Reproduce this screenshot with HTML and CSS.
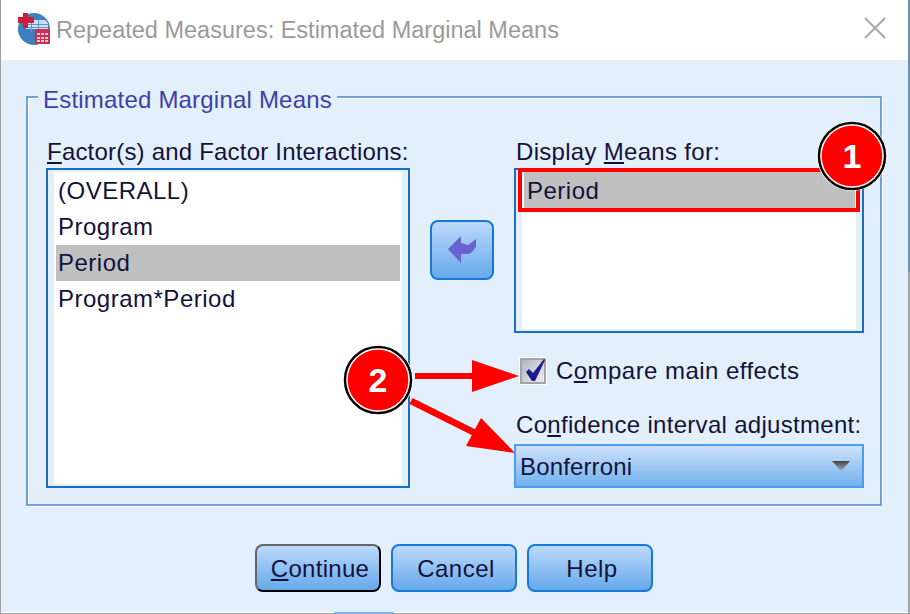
FILE: index.html
```html
<!DOCTYPE html>
<html lang="en">
<head>
    <meta charset="UTF-8">
    <meta name="viewport" content="width=device-width, initial-scale=1.0">
    <title>Repeated Measures: Estimated Marginal Means</title>
    <link rel="stylesheet" href="styles.css">
</head>
<body>
    <div class="dialog">
        <div class="titlebar">
            <svg class="app-icon" width="33" height="33" viewBox="0 0 33 33">
                <circle cx="16" cy="16" r="16" fill="#3f7fbd"/>
                <path d="M8 7h19l3 3v6H8z" fill="#cfe0f2"/>
                <path d="M8 11h22v1H8zM8 14h22v1H8zM13 7h1v12h-1zM20 7h1v9h-1z" fill="#5d94cb"/>
                <path d="M5 0h5v4h6v6h-6v5H5v-5H0V4h5z" fill="#cf1b3c"/>
                <rect x="17" y="16" width="15" height="15" fill="#c8304f"/>
                <path d="M19 20h3v2h-3zM23 20h3v2h-3zM27 20h3v2h-3zM19 24h3v2h-3zM23 24h3v2h-3zM27 24h3v2h-3zM19 27h3v2h-3zM23 27h3v2h-3zM27 27h3v2h-3z" fill="#f2c6d0"/>
            </svg>
            <span class="title-text">Repeated Measures: Estimated Marginal Means</span>
            <svg class="close-icon" width="22" height="22" viewBox="0 0 22 22">
                <path d="M1 1l20 20M21 1L1 21" stroke="#a8a8a8" stroke-width="2" fill="none"/>
            </svg>
        </div>

        <div class="content">
            <div class="group">
                <span class="group-title">Estimated Marginal Means</span>
                <div class="group-body">
                    <div class="factors">
                        <label class="field-label"><u>F</u>actor(s) and Factor Interactions:</label>
                        <ul class="listbox factors-list">
                            <li>(OVERALL)</li>
                            <li>Program</li>
                            <li class="selected">Period</li>
                            <li>Program*Period</li>
                        </ul>
                    </div>
                    <button class="arrow-btn" type="button">
                        <svg width="30" height="30" viewBox="0 0 30 30">
                            <path d="M1 14L14 1v7l7 2 8-6v8l-4 5-3 2h-8v9z" fill="#6a62d0"/>
                        </svg>
                    </button>
                    <div class="means">
                        <label class="field-label">Display <u>M</u>eans for:</label>
                        <ul class="listbox means-list">
                            <li class="selected">Period</li>
                        </ul>
                        <div class="check-row">
                            <span class="checkbox">
                                <svg class="tick" width="22" height="22" viewBox="0 0 22 22">
                                    <path d="M4 12l3-3 4 4L22-1l1 1-10 21h-3z" fill="#1b1b8e"/>
                                </svg>
                            </span>
                            <span>C<u>o</u>mpare main effects</span>
                        </div>
                        <label class="field-label adjust-label">Co<u>n</u>fidence interval adjustment:</label>
                        <div class="select">
                            <span>Bonferroni</span>
                            <span class="select-arrow"></span>
                        </div>
                    </div>
                </div>
            </div>
            <div class="actions">
                <button class="btn btn-default" type="button"><u>C</u>ontinue</button>
                <button class="btn" type="button">Cancel</button>
                <button class="btn" type="button">Help</button>
            </div>
        </div>
        <div class="edge"></div>

        <!-- red callouts drawn over the dialog -->
        <svg class="callouts" width="910" height="614" viewBox="0 0 910 614">
            <rect x="520" y="170" width="338" height="40" fill="none" stroke="#f00" stroke-width="4"/>
            <path d="M415 373h57v-13l47 16-47 16v-13h-57z" fill="#f00"/>
            <path d="M411 401l66 33" stroke="#f00" stroke-width="6.5"/>
            <path d="M515 453l-49-7 15-28z" fill="#f00"/>
            <circle cx="852" cy="156" r="35" fill="#fff"/>
            <circle cx="852" cy="156" r="33" fill="#f00" stroke="#000" stroke-width="2.5"/>
            <circle cx="852" cy="156" r="31" fill="none" stroke="#fff" stroke-width="1.5"/>
            <text class="callout-num" x="852" y="168">1</text>
            <circle cx="378" cy="380" r="35" fill="#fff"/>
            <circle cx="378" cy="380" r="33" fill="#f00" stroke="#000" stroke-width="2.5"/>
            <circle cx="378" cy="380" r="31" fill="none" stroke="#fff" stroke-width="1.5"/>
            <text class="callout-num" x="378" y="392">2</text>
        </svg>
    </div>
</body>
</html>
```

FILE: styles.css
```css
* {
    box-sizing: border-box;
    margin: 0;
    padding: 0;
}
body {
    width: 910px;
    height: 614px;
    overflow: hidden;
    background: #fff;
    font-family: "Liberation Sans", Arial, sans-serif;
    font-size: 24px;
    letter-spacing: 0.25px;
    color: #14123c;
}
.dialog {
    position: relative;
    width: 910px;
    height: 614px;
    border-left: 1px solid #a0a0a0;
    padding-right: 2px;
    background: linear-gradient(#6d90b0 0, #6d90b0 272px, #a0a5aa 272px);
    display: flex;
    flex-direction: column;
}
/* title bar */
.titlebar {
    height: 60px;
    background: #fff;
    display: flex;
    align-items: center;
    padding: 0 22px 0 17px;
}
.app-icon {
    flex: none;
    margin-bottom: 2px;
}
.title-text {
    margin-left: 5px;
    color: #9a9a9a;
    font-size: 23.5px;
    letter-spacing: 0;
}
.close-icon {
    margin-left: auto;
    margin-bottom: 4px;
}
/* main panel */
.content {
    flex: 1;
    background: #e3effb;
    padding: 36px 26px 0 25px;
}
.group {
    position: relative;
    height: 410px;
    border: 2px solid #6fa3d8;
    box-shadow: inset 1px 1px 0 #fff, 1px 1px 0 #fff;
}
.group-title {
    position: absolute;
    left: 10px;
    top: -10px;
    padding: 0 5px;
    background: #e3effb;
    color: #3f3fa8;
    line-height: 24px;
    letter-spacing: 0.2px;
}
.group-body {
    display: flex;
    padding: 38px 0 0 18px;
}
.field-label {
    display: block;
    line-height: 32px;
    height: 32px;
}
.listbox {
    list-style: none;
    background: #fff;
    border: 2px solid #1a6fc4;
    box-shadow: inset 6px 2px 0 #e3effb, inset -6px -2px 0 #e3effb;
    line-height: 36px;
    letter-spacing: 0.5px;
}
.listbox .selected {
    background: #c0c0c0;
}
.factors {
    width: 364px;
}
.factors .field-label {
    padding-left: 1px;
    letter-spacing: 0.2px;
}
.factors-list {
    height: 320px;
    padding: 3px 8px;
}
.factors-list li {
    padding-left: 2px;
}
.arrow-btn {
    flex: none;
    width: 64px;
    height: 60px;
    margin: 84px 20px 0 20px;
    border: 2px solid #1479d8;
    border-radius: 8px;
    background: linear-gradient(#bcd9fb, #66a9ea);
    display: flex;
    align-items: center;
    justify-content: center;
}
.means {
    width: 350px;
}
.means .field-label {
    padding-left: 2px;
    letter-spacing: 0.3px;
}
.means-list {
    height: 165px;
    padding: 2px 7px 0 8px;
}
.means-list li {
    padding: 2px 0 0 3px;
    line-height: 34px;
}
.check-row {
    display: flex;
    align-items: center;
    gap: 10px;
    margin: 23px 0 0 6px;
    height: 30px;
    line-height: 32px;
    letter-spacing: 0.45px;
}
.checkbox {
    width: 26px;
    height: 26px;
    background: linear-gradient(135deg, #b4b4c0, #eeeef2);
    border: 2px solid #a4a4a8;
    outline: 1px solid #fff;
}
.tick {
    display: block;
    overflow: visible;
}
.means .adjust-label {
    margin-top: 23px;
}
.select {
    height: 44px;
    margin-top: 3px;
    border: 2px solid #4b9ff0;
    background: linear-gradient(#cde2fb, #72b1ee);
    display: flex;
    align-items: center;
    justify-content: space-between;
    padding: 2px 12px 0 4px;
    letter-spacing: 0.15px;
}
.select-arrow {
    width: 18px;
    height: 10px;
    margin-bottom: 2px;
    background: linear-gradient(#444, #aaa);
    clip-path: polygon(0 0, 100% 0, 50% 100%);
}
/* bottom buttons */
.actions {
    display: flex;
    justify-content: center;
    gap: 10px;
    margin-top: 38px;
}
.btn {
    width: 126px;
    height: 48px;
    padding: 2px 0 0 4px;
    border: 2px solid #1479d8;
    border-radius: 8px;
    background: linear-gradient(#bcd9fb, #66a9ea);
    font: inherit;
    letter-spacing: 0.5px;
    color: inherit;
}
.btn-default {
    letter-spacing: 0.3px;
    border-color: #666 #000 #000 #666;
}
/* window bottom edge */
.edge {
    height: 2px;
    background:
        linear-gradient(90deg, transparent 333px, #7fb0ea 333px, #7fb0ea 393px, transparent 393px),
        linear-gradient(#fff 1px, #a8a8a8 1px);
}
/* annotations */
.callouts {
    position: absolute;
    left: -1px;
    top: 0;
    pointer-events: none;
}
.callout-num {
    font-family: "Liberation Sans", Arial, sans-serif;
    font-size: 34px;
    font-weight: bold;
    fill: #fff;
    text-anchor: middle;
    letter-spacing: 0;
}
```
